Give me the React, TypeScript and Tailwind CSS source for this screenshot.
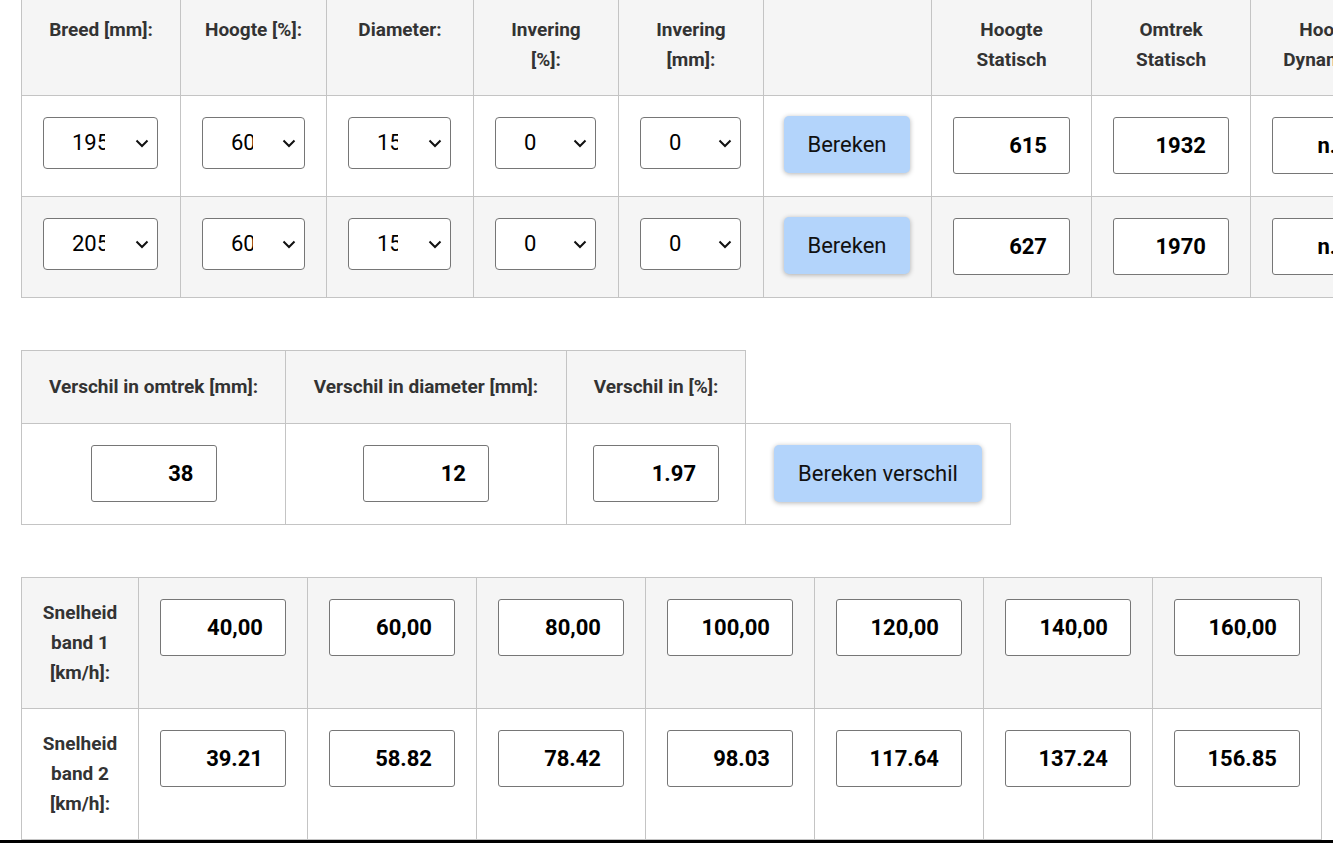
import React from 'react';

type SelectCell = { value: string; width: string; clip: string };

const HEAD1 = [
  { label: ['Breed [mm]:'], w: 'w-[159px]' },
  { label: ['Hoogte [%]:'], w: 'w-[146px]' },
  { label: ['Diameter:'], w: 'w-[147px]' },
  { label: ['Invering', '[%]:'], w: 'w-[145px]' },
  { label: ['Invering', '[mm]:'], w: 'w-[145px]' },
  { label: [], w: 'w-[168px]' },
  { label: ['Hoogte', 'Statisch'], w: 'w-[160px]' },
  { label: ['Omtrek', 'Statisch'], w: 'w-[159px]' },
  { label: ['Hoogte', 'Dynamisch'], w: 'w-[160px]' },
];

const ROWS1 = [
  { bg: 'bg-white', selects: ['195', '60', '15', '0', '0'], outs: ['615', '1932', 'n.v.t.'] },
  { bg: 'bg-[#f5f5f5]', selects: ['205', '60', '15', '0', '0'], outs: ['627', '1970', 'n.v.t.'] },
];

const SELECT_STYLE: { width: string; clip: string }[] = [
  { width: 'w-[115px]', clip: 'w-[33px]' },
  { width: 'w-[103px]', clip: 'w-[22px]' },
  { width: 'w-[103px]', clip: 'w-[21px]' },
  { width: 'w-[101px]', clip: 'w-[19px]' },
  { width: 'w-[101px]', clip: 'w-[19px]' },
];

const SPEED1 = ['40,00', '60,00', '80,00', '100,00', '120,00', '140,00', '160,00'];
const SPEED2 = ['39.21', '58.82', '78.42', '98.03', '117.64', '137.24', '156.85'];

const border = 'border-[#c4c4c4]';

function Chevron() {
  return (
    <svg width="14" height="9" viewBox="0 0 14 9" fill="none" className="shrink-0">
      <path d="M1.5 1.5 L7 7 L12.5 1.5" stroke="#111" strokeWidth="2" />
    </svg>
  );
}

function FakeSelect({ s }: { s: SelectCell }) {
  return (
    <div className={`${s.width} h-[52px] flex items-center justify-between rounded-[4px] border border-[#767676] bg-white pl-[28px] pr-[8px]`}>
      <span className={`${s.clip} overflow-hidden whitespace-nowrap text-[22px] leading-none text-black`}>{s.value}</span>
      <Chevron />
    </div>
  );
}

function Output({ value, width = 'w-[117px]' }: { value: string; width?: string }) {
  return (
    <div className={`${width} h-[57px] flex items-center justify-end rounded-[3px] border border-[#767676] bg-white pr-[22px] text-[22px] font-bold text-black whitespace-nowrap`}>
      {value}
    </div>
  );
}

function Button({ children, width }: { children: React.ReactNode; width: string }) {
  return (
    <div className={`${width} h-[57px] flex items-center justify-center rounded-[5px] bg-[#b3d4fb] text-[22px] text-[#111] shadow-[0_1px_5px_rgba(0,0,0,0.3)]`}>
      {children}
    </div>
  );
}

function HeadText({ lines }: { lines: string[] }) {
  return (
    <div className="text-center text-[19px] font-bold leading-[30px] text-[#333]">
      {lines.map((l) => (
        <div key={l}>{l}</div>
      ))}
    </div>
  );
}

export default function App() {
  return (
    <div className="relative w-[1333px] h-[843px] overflow-hidden bg-white font-['Roboto',sans-serif]">
      <div className="pl-[21px]">
        {/* banden tabel */}
        <div className={`-mt-[6px] w-max border-l ${border}`}>
          <div className="flex">
            {HEAD1.map((h, i) => (
              <div key={i} className={`${h.w} h-[102px] shrink-0 border-r border-b ${border} bg-[#f5f5f5] pt-[21px]`}>
                <HeadText lines={h.label} />
              </div>
            ))}
          </div>
          {ROWS1.map((r, ri) => (
            <div key={ri} className={`flex ${r.bg}`}>
              {r.selects.map((v, i) => (
                <div key={i} className={`${HEAD1[i].w} h-[101px] shrink-0 border-r border-b ${border} pl-[21px] pt-[21px]`}>
                  <FakeSelect s={{ value: v, ...SELECT_STYLE[i] }} />
                </div>
              ))}
              <div className={`w-[168px] h-[101px] shrink-0 border-r border-b ${border} pl-[20px] pt-[20px]`}>
                <Button width="w-[126px]">Bereken</Button>
              </div>
              {r.outs.map((v, i) => (
                <div key={i} className={`${HEAD1[6 + i].w} h-[101px] shrink-0 border-r border-b ${border} pl-[21px] pt-[21px]`}>
                  <Output value={v} width={i === 1 ? 'w-[116px]' : 'w-[117px]'} />
                </div>
              ))}
            </div>
          ))}
        </div>

        {/* verschil tabel */}
        <div className="mt-[52px] w-max">
          <div className={`flex border-l border-t ${border} w-max`}>
            <div className={`w-[264px] h-[73px] flex items-center justify-center border-r border-b ${border} bg-[#f5f5f5]`}>
              <HeadText lines={['Verschil in omtrek [mm]:']} />
            </div>
            <div className={`w-[281px] h-[73px] flex items-center justify-center border-r border-b ${border} bg-[#f5f5f5]`}>
              <HeadText lines={['Verschil in diameter [mm]:']} />
            </div>
            <div className={`w-[179px] h-[73px] flex items-center justify-center border-r border-b ${border} bg-[#f5f5f5]`}>
              <HeadText lines={['Verschil in [%]:']} />
            </div>
          </div>
          <div className={`flex items-start border-l ${border}`}>
            <div className={`w-[264px] h-[101px] flex justify-center border-r border-b ${border} pt-[21px]`}>
              <Output value="38" width="w-[126px]" />
            </div>
            <div className={`w-[281px] h-[101px] flex justify-center border-r border-b ${border} pt-[21px]`}>
              <Output value="12" width="w-[126px]" />
            </div>
            <div className={`w-[179px] h-[101px] flex justify-center border-r border-b ${border} pt-[21px]`}>
              <Output value="1.97" width="w-[126px]" />
            </div>
            <div className={`-mt-px w-[265px] h-[102px] flex justify-center border-t border-r border-b ${border} pt-[21px]`}>
              <Button width="w-[208px]">Bereken verschil</Button>
            </div>
          </div>
        </div>

        {/* snelheid tabel */}
        <div className={`mt-[52px] w-max border-l border-t ${border}`}>
          {[
            { label: ['Snelheid', 'band 1', '[km/h]:'], vals: SPEED1, bg: 'bg-[#f5f5f5]' },
            { label: ['Snelheid', 'band 2', '[km/h]:'], vals: SPEED2, bg: 'bg-white' },
          ].map((row, ri) => (
            <div key={ri} className={`flex ${row.bg}`}>
              <div className={`w-[117px] h-[131px] flex items-center justify-center border-r border-b ${border} ${ri === 1 ? 'bg-white' : 'bg-[#f5f5f5]'}`}>
                <HeadText lines={row.label} />
              </div>
              {row.vals.map((v) => (
                <div key={v} className={`w-[169px] h-[131px] flex justify-center border-r border-b ${border} pt-[21px]`}>
                  <Output value={v} width="w-[126px]" />
                </div>
              ))}
            </div>
          ))}
        </div>
      </div>
      <div className="h-[3px] w-full bg-black" />
    </div>
  );
}
